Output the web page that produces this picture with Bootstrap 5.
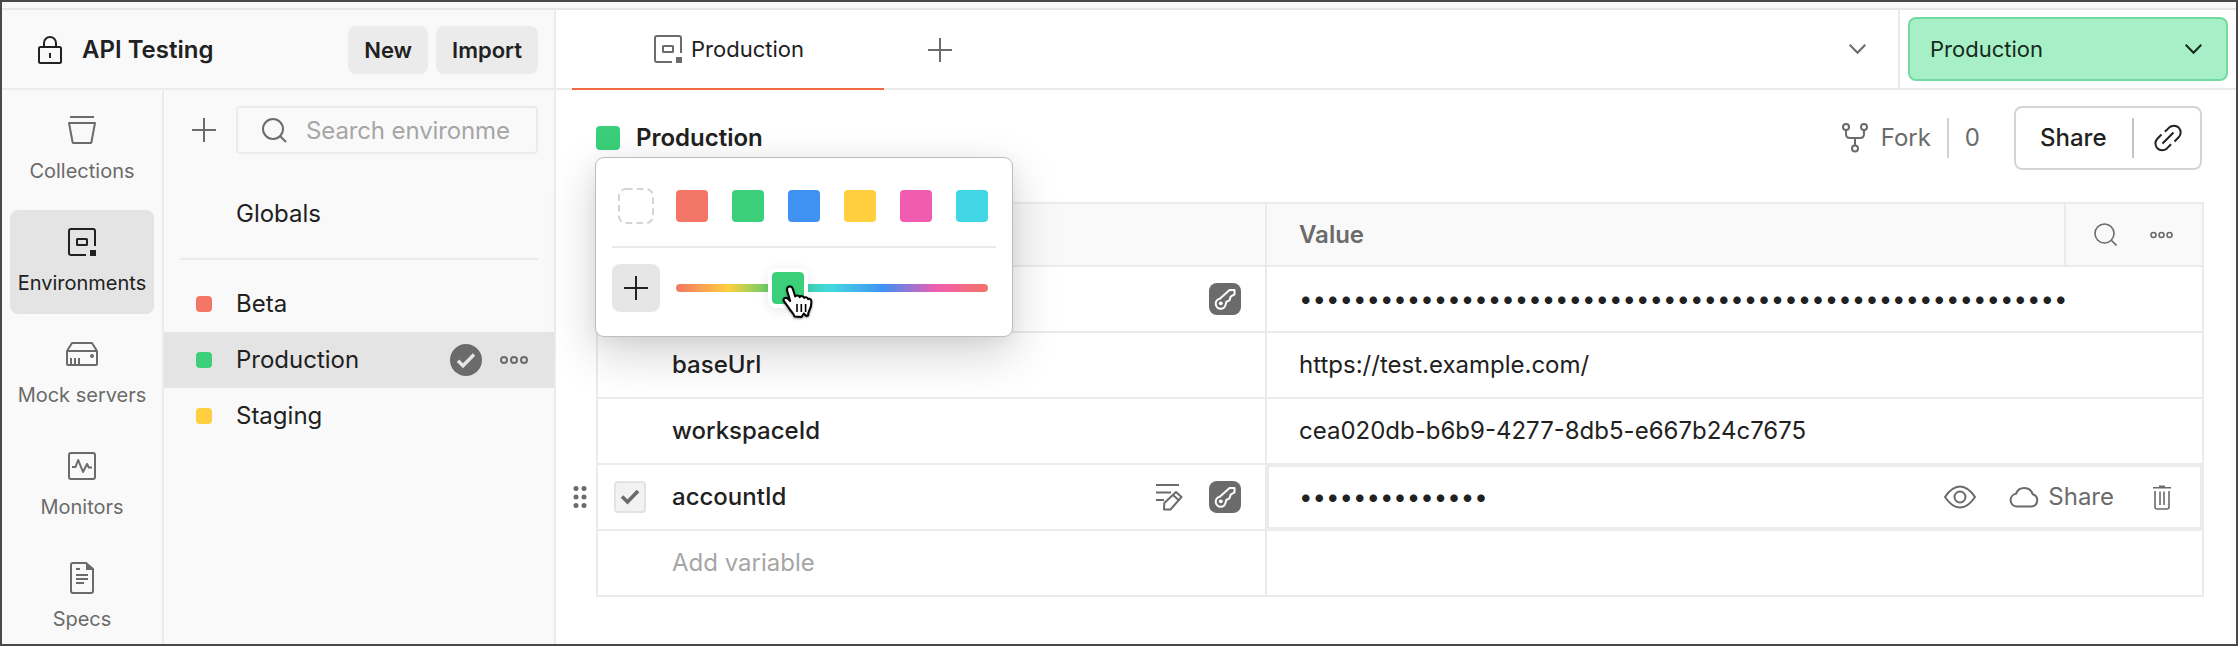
<!DOCTYPE html>
<html lang="en">
<head>
<meta charset="utf-8">
<meta name="viewport" content="width=device-width, initial-scale=1">
<title>API Testing</title>
<link href="https://cdn.jsdelivr.net/npm/bootstrap@5.3.0/dist/css/bootstrap.min.css" rel="stylesheet">
<style>
:root{--line:#ebebeb;--ink:#212121;--mute:#6b6b6b;--pale:#a6a6a6;--soft:#f9f9f9;--hover:#e6e6e6}
html,body{height:100%}
body{font-family:Inter,"Liberation Sans",sans-serif;font-size:24px;line-height:30px;color:var(--ink);overflow:hidden}
svg{display:block;flex:none;fill:none;stroke:currentColor;stroke-width:2}
svg.thin{stroke-width:1.6}
.shell{height:646px;border:2px solid #4a4848}
.strip{height:8px;background:var(--soft);border-bottom:2px solid #e6e6e6}
.text-mute{color:var(--mute)}.text-pale{color:var(--pale)}
.side{width:554px;background:var(--soft);border-right:2px solid var(--line)}
.side-head{height:80px;border-bottom:2px solid var(--line);padding:2px 16px 0 36px}
.btn-soft{background:#ebebeb;height:48px;border-radius:8px;font-size:22px;font-weight:600;padding:0 16px;line-height:48px;border:0;color:var(--ink)}
.rail{width:162px;border-right:2px solid var(--line);padding:8px 8px 0}
.rail-item{height:104px;flex:none;border-radius:8px;padding-top:16px;font-size:20px;line-height:24px;color:var(--mute);text-decoration:none}
.rail-item span{margin-top:13px}
.rail-item.active{background:#e4e4e4;color:var(--ink)}
.search{width:302px;height:48px;border:2px solid var(--line);border-radius:4px;padding-left:23px}
.env{height:56px;padding-left:32px}
.env.active{background:#e4e4e4}
.dot{width:16px;height:16px;border-radius:4px;flex:none}
.env-name{margin-left:24px}
.top-bar{height:80px;border-bottom:2px solid var(--line)}
.doc-tab{width:312px;height:80px;margin-left:16px;border-bottom:2px solid #ee6b42;font-size:22px;padding-left:82px;padding-bottom:0}
.picker-wrap{width:338px;border-left:2px solid var(--line);padding:7px 8px 0}
.env-select{height:64px;border:2px solid #72da9f;background:#a7f0c7;border-radius:8px;font-size:22px;padding:0 24px 0 20px;color:#15291d}
.title-row{height:112px;padding:16px 34px 0 40px}
.chip{width:24px;height:24px;border-radius:4px;background:#3acf78}
.rule-v{width:2px;height:40px;background:#d1d1d1}
.share-box{width:188px;height:64px;border:2px solid #d4d4d4;border-radius:8px}
.grid-box{width:1608px;margin-left:40px;border:2px solid var(--line)}
.g-row{height:66px;border-bottom:2px solid var(--line)}
.g-row:last-child{height:64px;border-bottom:0}
.g-head{height:63px;background:var(--soft);color:var(--mute);font-weight:600}
.col-key{width:669px;flex:none;border-right:2px solid var(--line);padding:0 24px 0 74px;font-weight:500}
.col-val{padding-left:32px}
.tools{width:138px;border-left:2px solid var(--line);height:100%;padding-left:28px}
.focus-cell{margin:-2px;border:4px solid var(--line);padding-left:30px;height:68px}
.key-badge{width:32px;height:32px;border-radius:8px;background:#6b6b6b;color:#fff}
.tick{width:32px;height:32px;border:2px solid #e3e3e3;border-radius:4px;background:#f2f2f2;margin-left:-58px;margin-right:26px;color:#6b6b6b}
.grip{position:absolute;left:-26px;top:20px}
.secret{letter-spacing:-.02px}
.palette{position:absolute;left:39px;top:67px;width:418px;height:180px;background:#fff;border:1px solid #bdbdbd;border-radius:9px;box-shadow:0 16px 48px rgba(0,0,0,.18),0 4px 16px rgba(0,0,0,.05);z-index:5;padding:30px 16px 0}
.swatches{padding-left:6px;height:36px}
.sw{width:32px;height:32px;border-radius:4px}
.no-color{stroke:#d4d4d4}
.palette-line{height:2px;background:var(--line);margin:22px 0 16px}
.plus-btn{width:48px;height:48px;border-radius:8px;background:#e6e6e6}
.hue{position:relative;width:312px;height:8px;border-radius:4px;margin-left:16px;background:linear-gradient(90deg,#f37565 0%,#ffcf3f 16.67%,#3acf78 33.33%,#43d7e5 50%,#3f91f2 66.67%,#f15cb0 83.33%,#f37565 100%)}
.thumb{position:absolute;left:92px;top:-16px;width:40px;height:40px;border:4px solid #fff;border-radius:8px;background:#3acf78 padding-box;box-shadow:0 2px 12px rgba(0,0,0,.1)}
.pointer{position:absolute;left:105px;top:0}
</style>
</head>
<body>
<div class="shell d-flex flex-column">
  <div class="strip flex-shrink-0"></div>
  <div class="d-flex flex-grow-1" style="min-height:0">

    <aside class="side d-flex flex-column flex-shrink-0">
      <div class="side-head d-flex align-items-center flex-shrink-0">
        <svg width="24" height="28" viewBox="0 0 24 28"><rect x="1" y="11" width="22" height="16" rx="1.5"/><path d="M6 11V7a6 6 0 0 1 12 0v4M12 17v5"/></svg>
        <span class="fw-semibold flex-grow-1" style="margin-left:20px">API Testing</span>
        <button class="btn btn-soft">New</button>
        <button class="btn btn-soft ms-2">Import</button>
      </div>
      <div class="d-flex flex-grow-1" style="min-height:0">
        <nav class="rail d-flex flex-column gap-2 flex-shrink-0 overflow-hidden">
          <a class="rail-item d-flex flex-column align-items-center">
            <svg width="32" height="32" viewBox="0 0 32 32"><path d="M4 3h24M3 9h26l-3.600 19.200q-.2.8-1 .8H7.600q-.8 0-1-.8z" stroke-linejoin="round"/></svg>
            <span>Collections</span></a>
          <a class="rail-item active d-flex flex-column align-items-center">
            <svg width="32" height="32" viewBox="0 0 32 32"><path d="M29 20V5q0-2-2-2H5q-2 0-2 2v22q0 2 2 2h15"/><rect x="11" y="13" width="10" height="6" rx=".5"/><path d="M24 24h6v6h-6z" fill="currentColor" stroke="none"/></svg>
            <span>Environments</span></a>
          <a class="rail-item d-flex flex-column align-items-center">
            <svg width="32" height="32" viewBox="0 0 32 32"><path d="M1 13v13q0 1 1 1h28q1 0 1-1V13zL6 5h20l5 8" stroke-linejoin="round"/><path d="M5 20v6M9 20v6M13 20v6"/><circle cx="26" cy="18" r="2" fill="currentColor" stroke="none"/></svg>
            <span>Mock servers</span></a>
          <a class="rail-item d-flex flex-column align-items-center">
            <svg width="32" height="32" viewBox="0 0 32 32"><rect x="3" y="3" width="26" height="26" rx="2"/><path d="M6 17h3.500l2.700-7 4.800 12 4-8 1.800 3.500H26" stroke-linejoin="round"/></svg>
            <span>Monitors</span></a>
          <a class="rail-item d-flex flex-column align-items-center">
            <svg width="32" height="32" viewBox="0 0 32 32"><path d="M20 1H7Q5 1 5 3v26q0 2 2 2h18q2 0 2-2V7z"/><path d="M20 1v7h7z" fill="currentColor" stroke="none"/><path d="M10 7h4M10 13h12M10 17h12M10 21h8"/></svg>
            <span>Specs</span></a>
        </nav>
        <div class="flex-grow-1">
          <div class="d-flex align-items-center justify-content-between" style="padding:16px 16px 0 28px">
            <svg class="text-mute" width="24" height="24" viewBox="0 0 24 24"><path d="M12 0v24M0 12h24"/></svg>
            <div class="search d-flex align-items-center">
              <svg class="text-mute" width="26" height="26" viewBox="0 0 26 26"><circle cx="12" cy="12" r="10"/><path d="M19 19l6 6"/></svg>
              <span class="text-pale text-nowrap" style="margin:1px 0 0 19px;letter-spacing:-.12px">Search environme</span>
            </div>
          </div>
          <div style="margin:45px 0 0 72px">Globals</div>
          <div style="height:2px;background:var(--line);margin:29px 16px 16px"></div>
          <div class="env d-flex align-items-center"><i class="dot" style="background:#f37565"></i><span class="env-name">Beta</span></div>
          <div class="env active d-flex align-items-center"><i class="dot" style="background:#3acf78"></i><span class="env-name flex-grow-1">Production</span>
            <svg class="text-mute" width="32" height="32" viewBox="0 0 32 32"><circle cx="16" cy="16" r="16" fill="currentColor" stroke="none"/><path d="M8 16.800l5 5L24 10.500" stroke="#e6e6e6" stroke-width="3.400"/></svg>
            <svg class="text-mute" style="margin:0 26px 0 18px" width="28" height="10" viewBox="0 0 28 10"><circle cx="4" cy="5" r="3"/><circle cx="14" cy="5" r="3"/><circle cx="24" cy="5" r="3"/></svg>
          </div>
          <div class="env d-flex align-items-center"><i class="dot" style="background:#ffcf3f"></i><span class="env-name">Staging</span></div>
        </div>
      </div>
    </aside>

    <main class="flex-grow-1 bg-white">
      <div class="top-bar d-flex">
        <div class="doc-tab d-flex align-items-center">
          <svg class="text-mute" width="28" height="28" viewBox="2 2 28 28"><path d="M29 20V5q0-2-2-2H5q-2 0-2 2v22q0 2 2 2h15"/><rect x="11" y="13" width="10" height="6" rx=".5"/><path d="M24 24h6v6h-6z" fill="currentColor" stroke="none"/></svg>
          <span style="margin-left:9px">Production</span>
        </div>
        <svg class="text-mute" style="margin:28px 0 0 44px" width="24" height="24" viewBox="0 0 24 24"><path d="M12 0v24M0 12h24"/></svg>
        <svg class="text-mute ms-auto" style="margin:34px 32px 0 0" width="17" height="11" viewBox="0 0 17 11"><path d="M.7.700l7.800 8L16.300.7"/></svg>
        <div class="picker-wrap"><div class="env-select d-flex align-items-center justify-content-between"><span>Production</span>
          <svg width="17" height="11" viewBox="0 0 17 11"><path d="M.7.700l7.800 8L16.300.7"/></svg></div></div>
      </div>

      <div class="title-row d-flex align-items-start position-relative">
        <div class="d-flex align-items-center w-100" style="height:64px">
          <i class="chip"></i><span class="fw-semibold" style="margin-left:16px;margin-bottom:1px">Production</span>
          <div class="d-flex align-items-center ms-auto text-mute">
            <svg width="26" height="30" viewBox="0 0 26 30"><circle cx="4" cy="4" r="3"/><circle cx="22" cy="4" r="3"/><circle cx="13" cy="25.500" r="3"/><path d="M4 7v4q0 4 4 4h10q4 0 4-4V7M13 15v7.500"/></svg>
            <span style="margin-left:13px">Fork</span><i class="rule-v" style="margin:0 16px 0 16px"></i><span>0</span>
          </div>
          <div class="share-box d-flex align-items-center" style="margin-left:34px">
            <span style="font-weight:500;margin-left:24px">Share</span><i class="rule-v ms-auto" style="background:#c4c4c4"></i>
            <svg style="margin:0 18px 0 20px" width="28" height="28" viewBox="0 0 28 28"><path d="M7.500 10.500L3.300 14.700a7 7 0 0 0 0 9.500 7 7 0 0 0 9.600.2l4.200-4.200M20.500 17.500l4.200-4.200a7 7 0 0 0 0-9.700 7 7 0 0 0-9.600 0L10.900 7.800M8.500 19.500l11-11"/></svg>
          </div>
        </div>

        <div class="palette">
          <div class="swatches d-flex align-items-center">
            <svg class="no-color" width="36" height="36" viewBox="0 0 36 36"><rect x="1" y="1" width="34" height="34" rx="7" stroke-dasharray="6.600 4.200"/></svg>
            <div class="d-flex" style="gap:24px;margin-left:22px"><i class="sw" style="background:#f37565"></i><i class="sw" style="background:#3acf78"></i><i class="sw" style="background:#3f91f2"></i><i class="sw" style="background:#ffcf3f"></i><i class="sw" style="background:#f15cb0"></i><i class="sw" style="background:#43d7e5"></i></div>
          </div>
          <div class="palette-line"></div>
          <div class="d-flex align-items-center">
            <span class="plus-btn d-flex align-items-center justify-content-center"><svg width="24" height="24" viewBox="0 0 24 24"><path d="M12 0v24M0 12h24"/></svg></span>
            <div class="hue"><i class="thumb"></i>
              <svg class="pointer" width="34" height="38" viewBox="0 0 34 38"><path d="M6.500 3.500C8.500 1.500 11 2.500 11.800 5l2.400 7.500c.8-1.600 3.800-1.500 4.600.6 1-1.500 3.700-1.300 4.400.8 1.200-1.200 3.300-.6 4 1.200 1.600-.9 3.200.4 3.200 2.600 0 4-.6 6-2 8.600-.9 1.700-1.300 3-1.300 5.200l-1.800.5-2.500-2.500-2.300 3.500-7-.4c-.8-3-2.700-4.400-4.600-7-2.200-3.600-4.400-5.700-6.100-8.800-.9-2.600 1.800-3.900 4-2.200l2.400 2.400-2.900-9.800c-.3-1.300-.3-2.800.2-3.700z" fill="#fff" stroke="#000" stroke-linejoin="round" style="filter:drop-shadow(0 1px 1px rgba(0,0,0,.4))"/><path d="M16 20v8M20.300 20v8M24.600 20v8" stroke="#000" stroke-width="1.600"/></svg>
            </div>
          </div>
        </div>
      </div>

      <div class="grid-box">
        <div class="g-row g-head d-flex"><div class="col-key"></div><div class="col-val flex-grow-1 d-flex align-items-center">Value</div>
          <div class="tools d-flex align-items-center"><svg class="thin" width="23" height="23" viewBox="0 0 23 23"><circle cx="10.500" cy="10.500" r="9.500"/><path d="M17 17l5.500 5.500"/></svg>
          <svg class="thin" style="margin-left:33px" width="23" height="8" viewBox="0 0 23 8"><circle cx="3.500" cy="4" r="2.500"/><circle cx="11.500" cy="4" r="2.500"/><circle cx="19.500" cy="4" r="2.500"/></svg></div></div>
        <div class="g-row d-flex"><div class="col-key d-flex align-items-center"><span class="key-badge ms-auto"><svg width="32" height="32" viewBox="0 0 32 32"><path d="M10.800 15.800L20.600 7h4.900v4.400l-3.800 2.200-1.200 3.700-3.200 1.600-.6 2.300A5 5 0 1 1 10.800 15.800z" stroke-linejoin="round"/><circle cx="11.800" cy="20.300" r="1.900" fill="currentColor" stroke="none"/></svg></span></div>
          <div class="col-val d-flex align-items-center"><span class="secret">•••••••••••••••••••••••••••••••••••••••••••••••••••••••••</span></div></div>
        <div class="g-row d-flex"><div class="col-key d-flex align-items-center">baseUrl</div><div class="col-val d-flex align-items-center">https://test.example.com/</div></div>
        <div class="g-row d-flex"><div class="col-key d-flex align-items-center">workspaceId</div><div class="col-val d-flex align-items-center">cea020db-b6b9-4277-8db5-e667b24c7675</div></div>
        <div class="g-row d-flex position-relative">
          <svg class="grip text-mute" width="16" height="24" viewBox="0 0 16 24"><g fill="currentColor" stroke="none"><circle cx="4" cy="3.500" r="2.500"/><circle cx="12" cy="3.500" r="2.500"/><circle cx="4" cy="12" r="2.500"/><circle cx="12" cy="12" r="2.500"/><circle cx="4" cy="20.500" r="2.500"/><circle cx="12" cy="20.500" r="2.500"/></g></svg>
          <div class="col-key d-flex align-items-center">
            <span class="tick d-flex align-items-center justify-content-center"><svg width="20" height="16" viewBox="0 0 20 16"><path d="M2 7.500l5.500 5.500L18 2" stroke-width="3.600"/></svg></span>accountId
            <svg class="ms-auto text-mute" width="27" height="28" viewBox="0 0 27 28"><path d="M0 2h23M0 9.500h15M0 17h8"/><path d="M8 26.500l.3-6.500L20 9l5.500 5-11 12.500zM17 12l5.500 5" stroke-linejoin="round"/></svg>
            <span class="key-badge" style="margin-left:26px"><svg width="32" height="32" viewBox="0 0 32 32"><path d="M10.800 15.800L20.600 7h4.900v4.400l-3.800 2.200-1.200 3.700-3.200 1.600-.6 2.300A5 5 0 1 1 10.800 15.800z" stroke-linejoin="round"/><circle cx="11.800" cy="20.300" r="1.900" fill="currentColor" stroke="none"/></svg></span></div>
          <div class="focus-cell flex-grow-1 d-flex align-items-center"><span class="secret">••••••••••••••</span>
            <div class="ms-auto d-flex align-items-center text-mute" style="padding-right:29px">
              <svg width="32" height="24" viewBox="0 0 32 24"><path d="M1 12Q8 1.500 16 1.500T31 12Q24 22.500 16 22.500T1 12z" stroke-linejoin="round"/><circle cx="16" cy="12" r="5.500"/></svg>
              <svg style="margin-left:33px" width="30" height="22" viewBox="0 0 30 22"><path d="M7.500 20.500h15a6.300 6.300 0 0 0 1.200-12.300A8.800 8.800 0 0 0 7 7.800a6.400 6.400 0 0 0 .5 12.700z"/></svg>
              <span style="margin-left:9px">Share</span>
              <svg class="thin" style="margin-left:39px" width="18" height="25" viewBox="0 0 18 25"><path d="M0 2.800h18M2 6v16q0 2 2 2h10q2 0 2-2V6M7 6.500v13.500M11 6.500v13.500"/><path d="M6 .5h6v2H6z" fill="currentColor" stroke="none"/></svg>
            </div></div></div>
        <div class="g-row d-flex"><div class="col-key d-flex align-items-center fw-normal text-pale">Add variable</div><div class="col-val"></div></div>
      </div>
    </main>
  </div>
</div>
<script src="https://cdn.jsdelivr.net/npm/bootstrap@5.3.0/dist/js/bootstrap.bundle.min.js"></script>
</body>
</html>
